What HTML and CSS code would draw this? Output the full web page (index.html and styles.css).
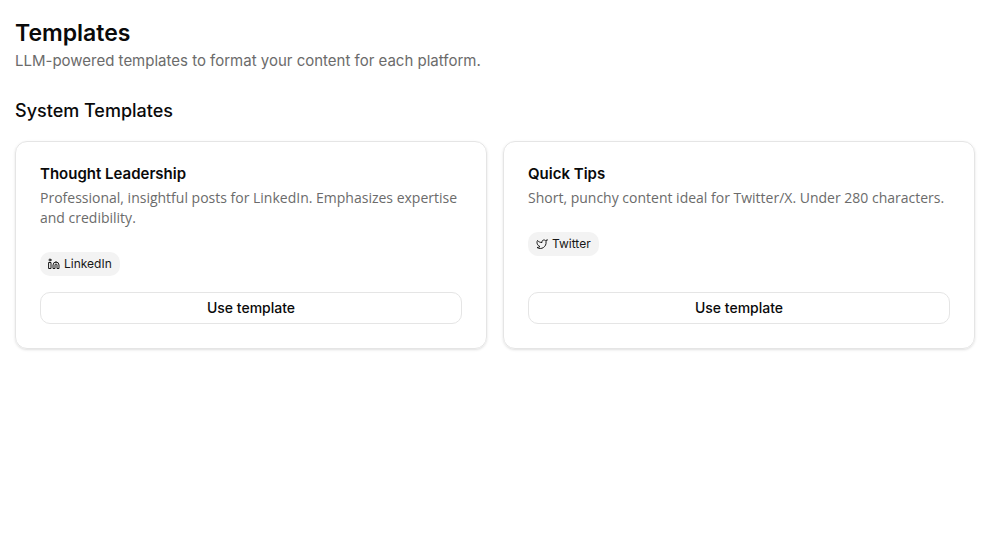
FILE: index.html
```html
<!DOCTYPE html>
<html lang="en">
<head>
  <meta charset="UTF-8" />
  <meta name="viewport" content="width=device-width, initial-scale=1.0" />
  <title>Templates</title>
  <link rel="stylesheet" href="styles.css">
</head>
<body>

  <main class="page">
    <header class="page-header">
      <h1>Templates</h1>
      <p>LLM-powered templates to format your content for each platform.</p>
    </header>

    <section class="templates">
      <h2>System Templates</h2>

      <div class="grid">
        <!-- LinkedIn -->
        <article class="card">
          <div class="card-header">
            <h3>Thought Leadership</h3>
            <p>Professional, insightful posts for LinkedIn. Emphasizes expertise and credibility.</p>
          </div>
          <div class="card-content">
            <span class="badge">
              <svg class="icon" viewBox="0 0 24 24" aria-hidden="true">
                <path d="M16 8a6 6 0 0 1 6 6v7h-4v-7a2 2 0 0 0-2-2 2 2 0 0 0-2 2v7h-4v-7a6 6 0 0 1 6-6z" />
                <rect width="4" height="12" x="2" y="9" />
                <circle cx="4" cy="4" r="2" />
              </svg>
              LinkedIn
            </span>
            <button type="button" class="btn">Use template</button>
          </div>
        </article>

        <!-- Twitter -->
        <article class="card">
          <div class="card-header">
            <h3>Quick Tips</h3>
            <p>Short, punchy content ideal for Twitter/X. Under 280 characters.</p>
          </div>
          <div class="card-content">
            <span class="badge">
              <svg class="icon" viewBox="0 0 24 24" aria-hidden="true">
                <path d="M22 4s-.7 2.1-2 3.4c1.6 10-9.4 17.3-18 11.6 2.2.1 4.400-.6 6-2C3 15.500.5 9.600 3 5c2.200 2.600 5.600 4.100 9 4-.9-4.200 4-6.600 7-3.800 1.100 0 3-1.200 3-1.200z" />
              </svg>
              Twitter
            </span>
            <button type="button" class="btn">Use template</button>
          </div>
        </article>
      </div>
    </section>
  </main>

</body>
</html>
```
FILE: styles.css
```css
* {
  margin: 0;
  padding: 0;
  box-sizing: border-box;
}

body {
  background: #fff;
  color: #0a0a0a;
  font-family: Inter, sans-serif;
  font-size: 15px;
  line-height: 24px;
}

.page {
  display: flex;
  flex-direction: column;
  gap: 24px;
  padding: 17px 6px 24px 15px;
}

.page-header h1 {
  font-size: 23px;
  font-weight: 600;
  line-height: 32px;
}

.page-header p {
  color: #6b6b6b;
}

.templates {
  display: flex;
  flex-direction: column;
  gap: 16px;
}

.templates h2 {
  font-size: 18px;
  font-weight: 500;
  line-height: 28px;
}

.grid {
  display: grid;
  grid-template-columns: repeat(2, 1fr);
  gap: 16px;
}

.card {
  display: flex;
  flex-direction: column;
  gap: 24px;
  padding: 24px;
  border: 1px solid #e5e5e5;
  border-radius: 12px;
  box-shadow: 0 1px 3px rgba(0, 0, 0, 0.1), 0 1px 2px -1px rgba(0, 0, 0, 0.1);
}

.card-header h3 {
  font-size: 15px;
  font-weight: 600;
  line-height: 16px;
  margin-bottom: 6px;
}

.card-header p {
  color: #6b6b6b;
  font-family: "Open Sans", sans-serif;
  font-size: 14px;
  line-height: 20px;
}

.card-content {
  display: flex;
  flex: 1;
  flex-direction: column;
  align-items: flex-start;
  justify-content: space-between;
  gap: 16px;
}

.badge {
  display: inline-flex;
  align-items: center;
  gap: 4px;
  padding: 4px 8px;
  border-radius: 10px;
  background: #f3f3f3;
  color: #171717;
  font-size: 12px;
  line-height: 16px;
}

.icon {
  width: 12px;
  height: 12px;
  fill: none;
  stroke: currentColor;
  stroke-width: 2;
  stroke-linecap: round;
  stroke-linejoin: round;
}

.btn {
  width: 100%;
  height: 32px;
  border: 1px solid #e5e5e5;
  border-radius: 10px;
  background: #fff;
  color: #0a0a0a;
  font-family: inherit;
  font-size: 14px;
  font-weight: 500;
  line-height: 20px;
  cursor: pointer;
}

.btn:hover {
  background: #f5f5f5;
}
```
